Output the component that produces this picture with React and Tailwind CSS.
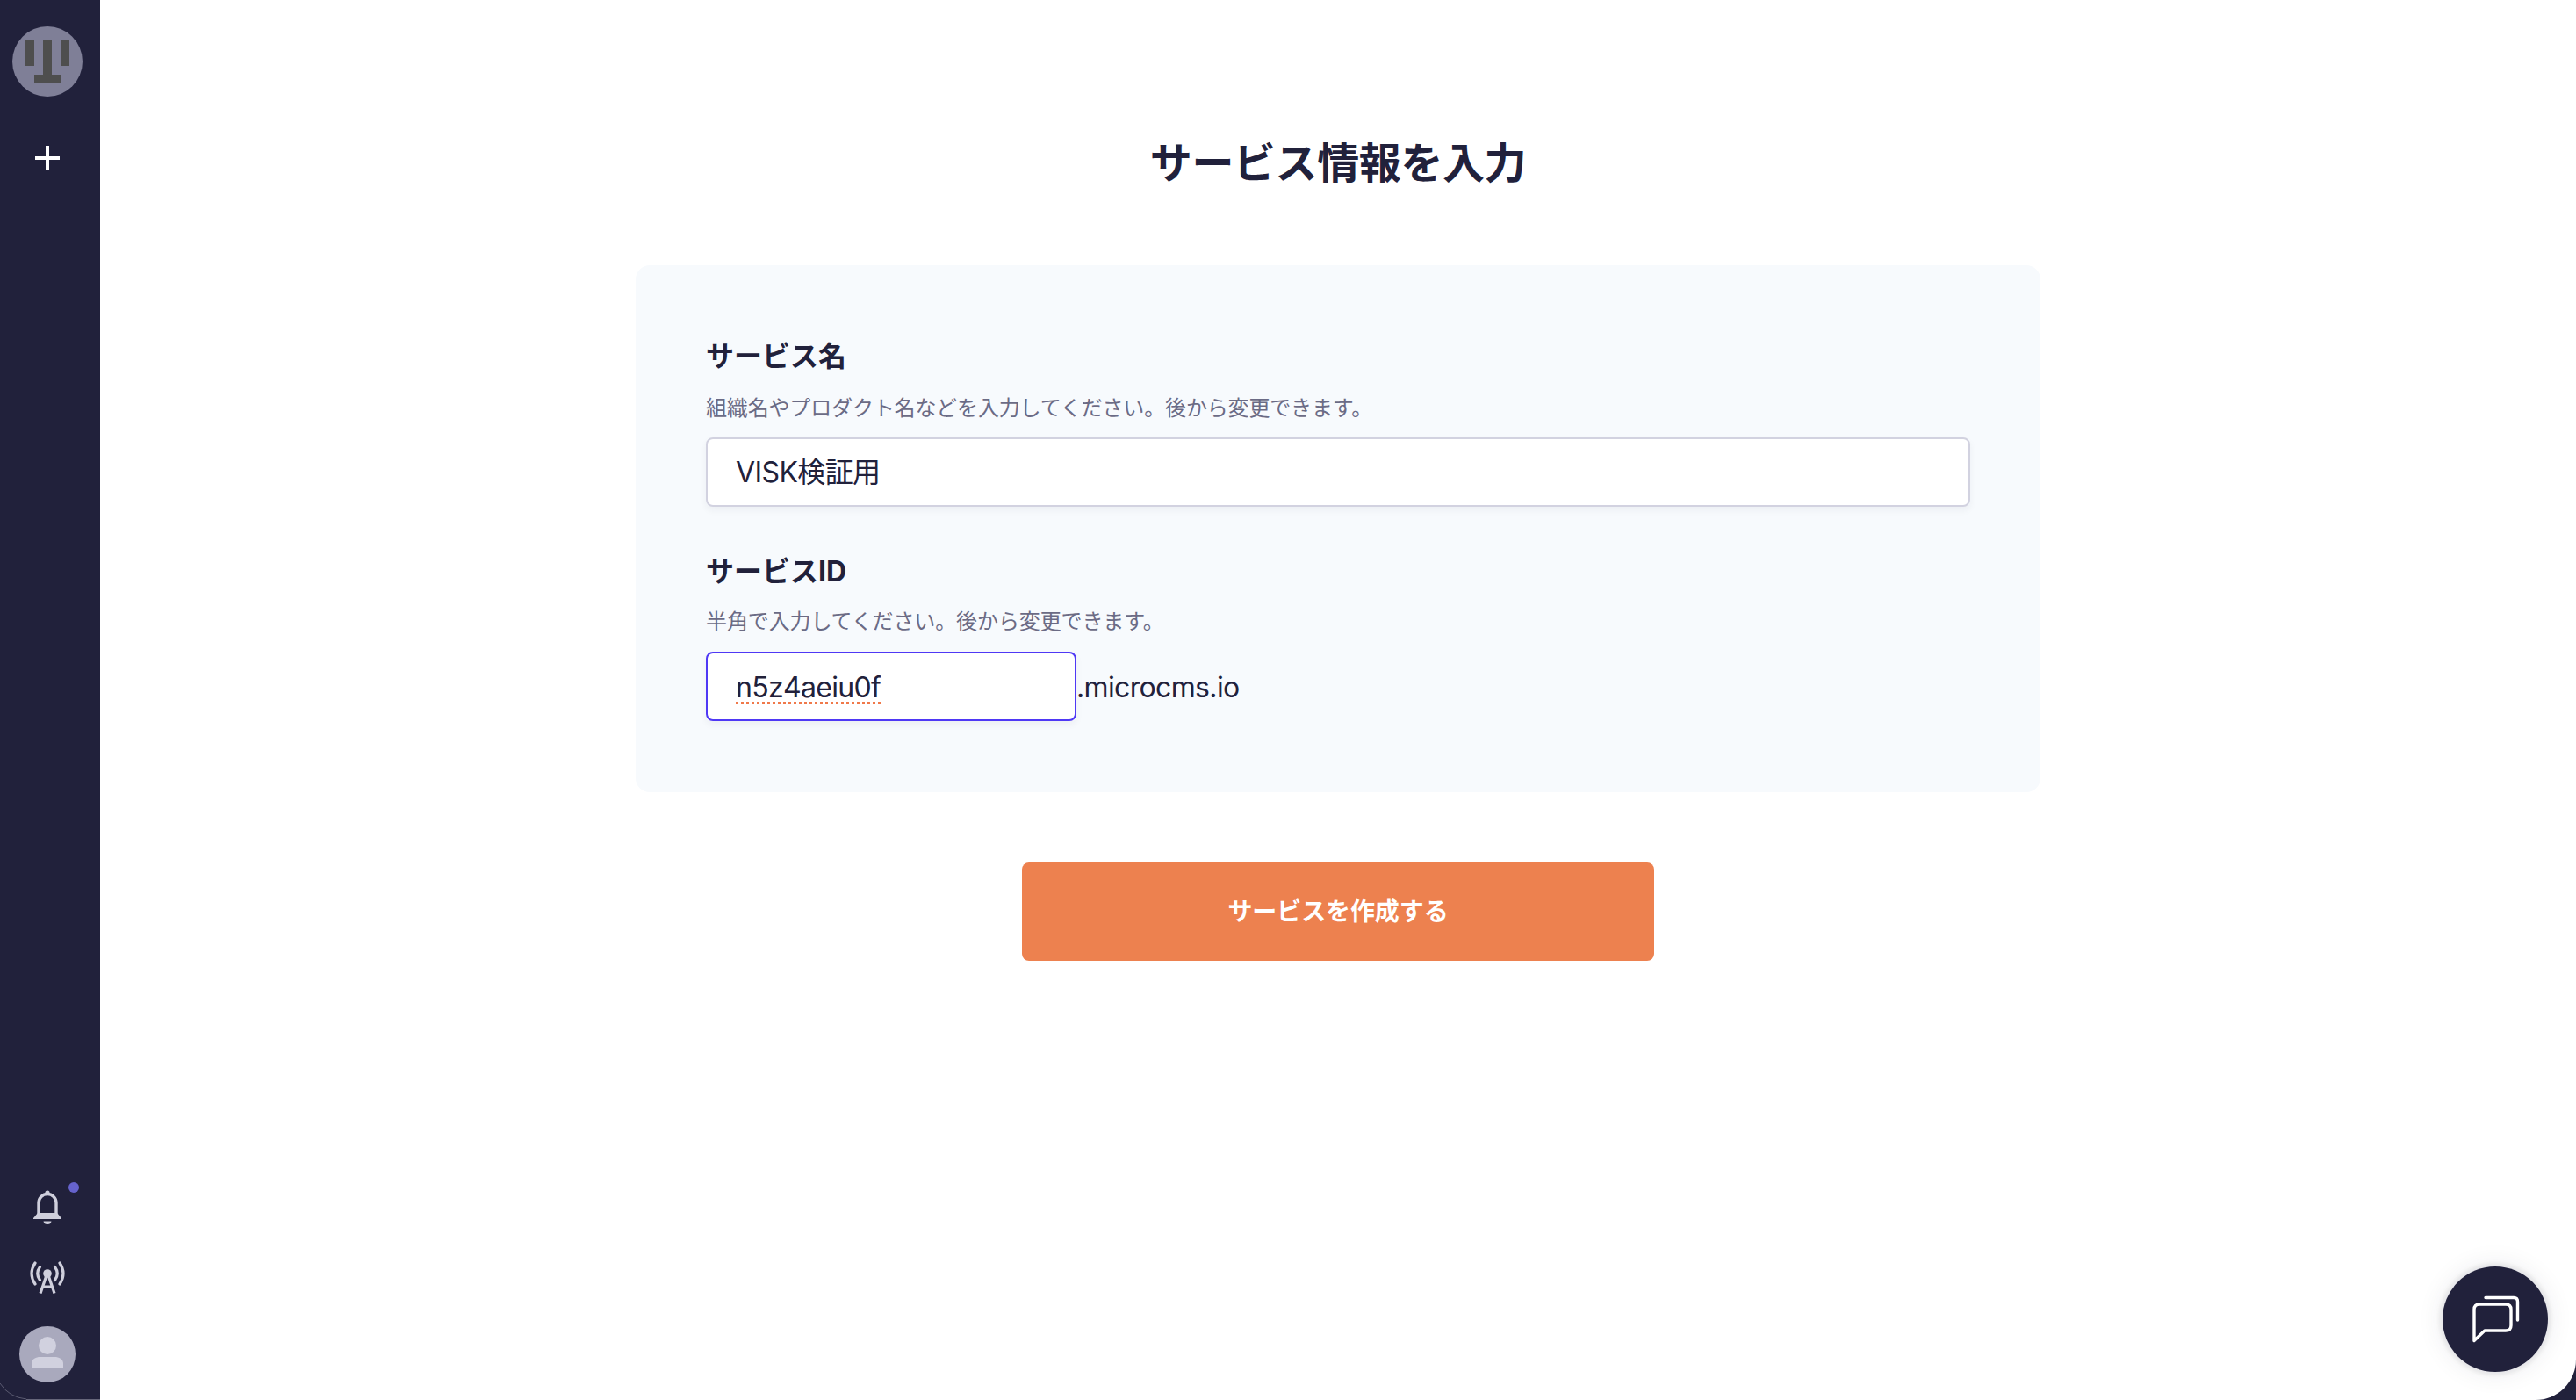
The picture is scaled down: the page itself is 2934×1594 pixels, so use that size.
const FONT = "font-['Inter','Noto_Sans_CJK_JP',sans-serif]";

function Logo() {
  return (
    <svg width="80" height="80" viewBox="0 0 80 80" className="block">
      <circle cx="40" cy="40" r="40" fill="#7f7f97" />
      <rect x="15" y="15" width="10" height="30" fill="#4e4e4e" />
      <rect x="35" y="15" width="10" height="42" fill="#4e4e4e" />
      <rect x="55" y="15" width="10" height="30" fill="#4e4e4e" />
      <rect x="25" y="55" width="30" height="10" fill="#4e4e4e" />
    </svg>
  );
}

function Plus() {
  return (
    <svg width="28" height="28" viewBox="0 0 28 28" className="block">
      <path d="M12 0h4v12h12v4H16v12h-4V16H0v-4h12z" fill="#ffffff" />
    </svg>
  );
}

function Bell() {
  return (
    <svg width="32" height="40" viewBox="0 0 32 40" className="block" fill="#cfcfdc">
      <circle cx="16" cy="3" r="2.6" />
      <path d="M6 28V14.500a10 10 0 0 1 20 0V28" fill="none" stroke="#cfcfdc" strokeWidth="3.4" />
      <path d="M5 26h22l5 6v1H0v-1z" />
      <path d="M11.500 35.500h9q-.6 3.500-4.500 3.500t-4.500-3.500z" />
    </svg>
  );
}

function Antenna() {
  return (
    <svg width="40" height="38" viewBox="0 0 40 38" className="block" fill="none" stroke="#cfcfdc" strokeWidth="3.2" strokeLinecap="round">
      <circle cx="20" cy="14" r="4.800" fill="#cfcfdc" stroke="none" />
      <path d="M6 2Q-2 14 6 26" />
      <path d="M11.500 6.500Q6 14 11.500 21.500" />
      <path d="M34 2Q42 14 34 26" />
      <path d="M28.500 6.500Q34 14 28.500 21.500" />
      <path d="M19 16L12 36.500M21 16L28 36.500M14 29H26" strokeLinecap="butt" />
    </svg>
  );
}

function Avatar() {
  return (
    <svg width="64" height="64" viewBox="0 0 64 64" className="block">
      <circle cx="32" cy="32" r="32" fill="#a9a9bd" />
      <circle cx="32" cy="22" r="10" fill="#d1d1df" />
      <path d="M14 48v-5c0-5 3-7 8-8h20c5 1 8 3 8 8v5z" fill="#d1d1df" />
    </svg>
  );
}

function ChatIcon() {
  return (
    <svg width="120" height="120" viewBox="0 0 120 120" className="block" fill="none" stroke="#ffffff" strokeWidth="3.4" strokeLinecap="round" strokeLinejoin="round">
      <path d="M36 84.500V49q0-6 6-6h30q6 0 6 6v18q0 6-6 6H48z" />
      <path d="M49 35.500h32q4.500 0 4.500 4.500v21" />
    </svg>
  );
}

export default function App() {
  return (
    <div className={`flex h-screen w-screen overflow-hidden bg-[#21213b] text-[#21213b] ${FONT}`}>
      <aside className="relative flex w-[114px] shrink-0 flex-col items-center pt-[30px] pr-[6px] pb-[20px]">
        <Logo />
        <div className="mt-[56px]">
          <Plus />
        </div>
        <div className="relative mt-auto">
          <Bell />
          <span className="absolute left-[40px] top-[-9px] h-[12px] w-[12px] rounded-full bg-[#6663cc]" />
        </div>
        <div className="mt-[41px]">
          <Antenna />
        </div>
        <div className="mt-[36px]">
          <Avatar />
        </div>
        <svg width="114" height="20" viewBox="0 0 114 20" className="absolute bottom-0 left-0" fill="none">
          <path d="M0 1Q10 17 30 19" stroke="#5a5a70" strokeWidth="1" />
          <path d="M30 19.500H114" stroke="#66667a" strokeWidth="1" />
        </svg>
      </aside>

      <main className="relative flex min-w-0 flex-1 flex-col items-center rounded-br-[46px] bg-white pt-[150px]">
        <h1 className="text-[48px] leading-[72px] font-bold tracking-[-0.4px]">サービス情報を入力</h1>

        <section className="mt-[80px] w-[1600px] rounded-[16px] bg-[#f7fafd] px-[80px] pt-[80px] pb-[81px]">
          <h2 className="text-[32px] leading-[48px] font-bold">サービス名</h2>
          <p className="mt-[17px] text-[24px] leading-[36px] tracking-[-0.16px] text-[#6b6b85]">
            組織名やプロダクト名などを入力してください。後から変更できます。
          </p>
          <div className="mt-[15px] flex h-[79px] items-center rounded-[8px] border-2 border-[#d2d2e0] bg-white px-[32px] text-[32px] tracking-[-0.6px] shadow-[0_4px_8px_rgba(33,33,59,0.05)]">
            VISK検証用
          </div>

          <h2 className="mt-[50px] text-[32px] leading-[48px] font-bold">サービスID</h2>
          <p className="mt-[15px] text-[24px] leading-[36px] tracking-[-0.12px] text-[#6b6b85]">
            半角で入力してください。後から変更できます。
          </p>
          <div className="mt-[16px] flex items-center">
            <div className="flex h-[79px] w-[422px] items-center rounded-[8px] border-2 border-[#4f38f5] bg-white px-[32px] pt-[2px] text-[32px] tracking-[-0.7px] shadow-[0_4px_8px_rgba(33,33,59,0.05)]">
              <span className="underline decoration-[#f0794a] decoration-dotted decoration-[3px] underline-offset-[5px]">n5z4aeiu0f</span>
            </div>
            <span className="pt-[2px] text-[32px] tracking-[-0.65px]">.microcms.io</span>
          </div>
        </section>

        <button className="mt-[80px] h-[112px] w-[720px] rounded-[8px] bg-[#ed814f] text-[28px] font-bold tracking-[-0.1px] text-white">
          サービスを作成する
        </button>

        <button className="absolute bottom-[32px] right-[32px] h-[120px] w-[120px] rounded-full bg-[#21213b] shadow-[0_0_4px_4px_rgba(33,33,59,0.08),0_0_24px_8px_rgba(33,33,59,0.05)]">
          <ChatIcon />
        </button>
      </main>
    </div>
  );
}
